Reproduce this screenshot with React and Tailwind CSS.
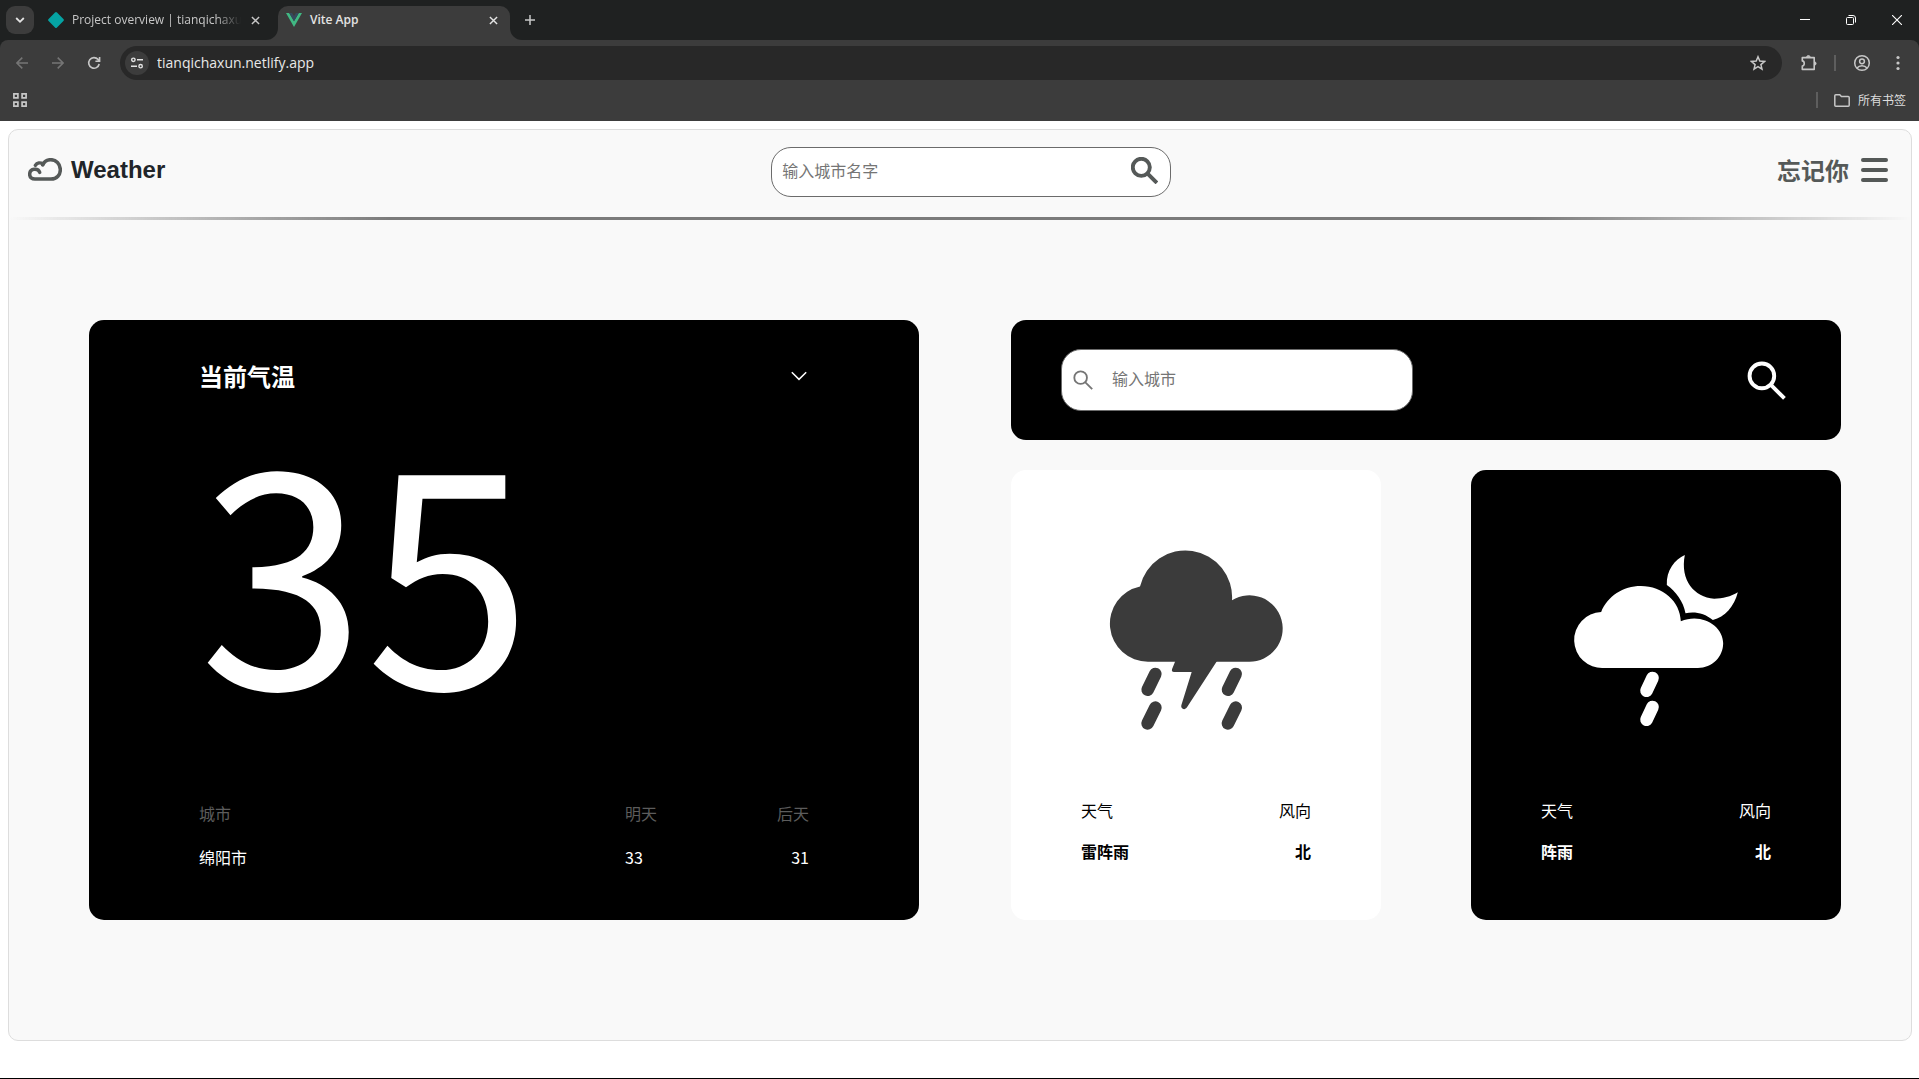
import React from "react";

const CJK = "font-['Noto_Sans_CJK_SC',sans-serif]";
const UI = "font-['Open_Sans','Noto_Sans_CJK_SC',sans-serif]";

function CloseGlyph({ className }) {
  return (
    <svg viewBox="0 0 10 10" className={className} stroke="currentColor" strokeWidth="1.6" fill="none">
      <path d="M1 1 9 9M9 1 1 9" />
    </svg>
  );
}

function TabStrip() {
  return (
    <div className={`flex h-10 items-end bg-[#1f2121] text-[12px] text-[#e3e3e3] ${UI}`}>
      <button aria-label="搜索标签页" className="mb-1.5 ml-1.5 flex size-7 shrink-0 items-center justify-center rounded-[9px] bg-[#3c3c3c]">
        <svg viewBox="0 0 10 10" className="size-2.5" stroke="#e3e3e3" strokeWidth="1.8" fill="none"><path d="M1.2 3 5 6.8 8.8 3" /></svg>
      </button>
      <div className="flex h-[34px] w-[232px] shrink-0 items-center pb-1.5 pl-3.5">
        <svg viewBox="0 0 16 16" className="size-4 shrink-0 text-[#05a3a3]"><path d="M7 .6a1.4 1.4 0 0 1 2 0l6.4 6.4a1.4 1.4 0 0 1 0 2L9 15.4a1.4 1.4 0 0 1-2 0L.6 9a1.4 1.4 0 0 1 0-2z" fill="currentColor" /></svg>
        <span className="ml-2 min-w-0 flex-1 overflow-hidden whitespace-nowrap text-[#c7c7c7] [mask-image:linear-gradient(to_right,#000_85%,transparent)]">Project overview | tianqichaxun</span>
        <button aria-label="关闭标签页" className="mr-1.5 ml-2.5 text-[#c7c7c7]"><CloseGlyph className="size-[9px]" /></button>
      </div>
      <span className="size-3 shrink-0 bg-[#3c3c3c]"><span className="block size-full rounded-br-xl bg-[#1f2121]" /></span>
      <div className="flex h-[34px] w-[232px] shrink-0 items-center rounded-t-[10px] bg-[#3c3c3c] pb-1.5 pl-2">
        <svg viewBox="0 0 16 14" className="h-3.5 w-4 shrink-0">
          <path d="M0 0h3.2L8 8.3 12.8 0H16L8 14z" fill="#41b883" />
          <path d="M3.2 0H6.1L8 3.3 9.9 0h2.9L8 8.3z" fill="#35495e" />
        </svg>
        <span className="ml-2 flex-1 font-semibold">Vite App</span>
        <button aria-label="关闭标签页" className="mr-3"><CloseGlyph className="size-[9px]" /></button>
      </div>
      <span className="size-3 shrink-0 bg-[#3c3c3c]"><span className="block size-full rounded-bl-xl bg-[#1f2121]" /></span>
      <button aria-label="新标签页" className="mb-[15px] ml-[3px] text-[#c7c7c7]">
        <svg viewBox="0 0 10 10" className="size-2.5" stroke="currentColor" strokeWidth="1.5"><path d="M5 0v10M0 5h10" /></svg>
      </button>
      <div className="mb-[15px] ml-auto flex gap-9 pr-[17px] text-white">
        <button aria-label="最小化"><svg viewBox="0 0 10 10" className="size-2.5" stroke="currentColor"><path d="M0 4.5h10" /></svg></button>
        <button aria-label="还原"><svg viewBox="0 0 10 10" className="size-2.5" stroke="currentColor" fill="none"><rect x=".5" y="2.5" width="7" height="7" rx="1" /><path d="M2.5.5H7a2.5 2.5 0 0 1 2.5 2.5v4.5" /></svg></button>
        <button aria-label="关闭"><svg viewBox="0 0 10 10" className="size-2.5" stroke="currentColor" strokeWidth="1.1"><path d="M0 0 10 10M10 0 0 10" /></svg></button>
      </div>
    </div>
  );
}

function AddressRow() {
  return (
    <div className="flex h-[43px] items-center pt-[3px] text-[#c7c7c7]">
      <button aria-label="后退" className="ml-4 text-[#757575]">
        <svg viewBox="0 0 12 12" className="size-3" stroke="currentColor" strokeWidth="1.5" fill="none"><path d="M12 6H1M6.3.6.9 6l5.4 5.4" /></svg>
      </button>
      <button aria-label="前进" className="ml-6 text-[#757575]">
        <svg viewBox="0 0 12 12" className="size-3" stroke="currentColor" strokeWidth="1.5" fill="none"><path d="M0 6h11M5.7.6 11.1 6l-5.4 5.4" /></svg>
      </button>
      <button aria-label="重新加载" className="ml-6">
        <svg viewBox="0 0 12 12" className="size-3 overflow-visible" stroke="currentColor" strokeWidth="1.6" fill="none"><path d="M11.2 7A5.3 5.3 0 1 1 10 2.4L11.3 4M11.6 0v4.2H7.4" /></svg>
      </button>
      <div className="ml-5 flex h-[34px] flex-1 items-center rounded-full bg-[#282828]">
        <button aria-label="查看网站信息" className="ml-[5px] flex size-6 shrink-0 items-center justify-center rounded-full bg-[#3c3c3c]">
          <svg viewBox="0 0 12 12" className="size-3" stroke="#e3e3e3" strokeWidth="1.4" fill="none"><circle cx="2.4" cy="2.8" r="1.7" /><path d="M6 2.8h6M0 9.2h6" /><circle cx="9.6" cy="9.2" r="1.7" /></svg>
        </button>
        <input aria-label="地址" defaultValue="tianqichaxun.netlify.app" className={`ml-2 min-w-0 flex-1 bg-transparent text-[14px] leading-5 text-[#e8e8e8] outline-none ${UI}`} />
        <button aria-label="添加书签" className="mr-4">
          <svg viewBox="0 0 16 16" className="size-4" stroke="currentColor" strokeWidth="1.5" fill="none"><path d="m8 1.8 1.8 4.3 4.7.4-3.6 3.1 1.1 4.6L8 11.7l-4 2.5 1.1-4.6L1.5 6.5l4.7-.4z" /></svg>
        </button>
      </div>
      <button aria-label="扩展程序" className="ml-[18px]">
        <svg viewBox="0 0 18 18" className="size-[18px]" fill="none" stroke="currentColor" strokeWidth="1.6" strokeLinejoin="round"><path d="M2.3 3.6h11.9v11.8H2.3v-3.3c2.6-.4 2.6-4.8 0-5.2z" /><path d="M6.6 2.8a1.9 1.9 0 0 1 3.6 0zM15 7.9a1.7 1.7 0 0 1 0 3.2z" fill="currentColor" strokeWidth=".8" /></svg>
      </button>
      <span className="ml-4 h-4 w-0.5 bg-[#5e5e5e]" />
      <button aria-label="个人资料" className="ml-[18px]">
        <svg viewBox="0 0 16 16" className="size-4 overflow-visible" fill="none" stroke="currentColor" strokeWidth="1.5"><circle cx="8" cy="8" r="7.3" /><circle cx="8" cy="6.3" r="2.4" /><path d="M3 13c2.4-3 7.6-3 10 0" /></svg>
      </button>
      <button aria-label="菜单" className="mr-[19px] ml-[26px]">
        <svg viewBox="0 0 4 16" className="h-4 w-1" fill="currentColor"><circle cx="2" cy="2.5" r="1.6" /><circle cx="2" cy="8" r="1.6" /><circle cx="2" cy="13.5" r="1.6" /></svg>
      </button>
    </div>
  );
}

function BookmarkRow() {
  return (
    <div className="flex h-[38px] items-center pb-1 text-[#c7c7c7]">
      <button aria-label="应用" className="ml-[13px]">
        <svg viewBox="0 0 14 14" className="size-3.5" fill="none" stroke="currentColor" strokeWidth="1.7"><path d="M.9.9h4v4h-4zM9.1.9h4v4h-4zM.9 9.1h4v4h-4zM9.1 9.1h4v4h-4z" /></svg>
      </button>
      <span className="ml-auto h-4 w-0.5 bg-[#5e5e5e]" />
      <button className={`mr-[13px] ml-4 flex items-center gap-2 text-[12px] leading-4 text-[#dedede] ${CJK}`}>
        <svg viewBox="0 0 16 13" className="h-[13px] w-4" fill="none" stroke="#c7c7c7" strokeWidth="1.5" strokeLinejoin="round"><path d="M.8 11V1.800c0-.6.4-1 1-1h4l1.600 1.700h6.800c.6 0 1 .4 1 1v7.700c0 .6-.4 1-1 1H1.800c-.6 0-1-.4-1-1z" /></svg>
        所有书签
      </button>
    </div>
  );
}

function CloudLogo() {
  return (
    <svg viewBox="84 127 102 69" className="h-[23px] w-[34px]" fill="none" stroke="#555958" strokeWidth="10.5" strokeLinecap="round" strokeLinejoin="round">
      <path d="M119 170C115 157 89 157 89 176c0 9 7 14 16 14h48c18 0 28-13 28-28 0-17-13-30-29-30-12 0-20 6-24 16" />
      <path d="M106 149c5-8 15-9 23-4" />
    </svg>
  );
}

function SearchGlyph({ className, weight }) {
  return (
    <svg viewBox="0 0 38 38" className={className} fill="none" stroke="currentColor" strokeWidth={weight}>
      <circle cx="14.5" cy="14.5" r="12" />
      <path d="M23 23 36.5 36.5" />
    </svg>
  );
}

function SiteHeader() {
  return (
    <header className="flex h-[87px] items-center justify-between pr-[23px] pb-1 pl-[19px]">
      <a href="#" className="flex items-center gap-[9px] pb-1 font-['Liberation_Sans',sans-serif] text-2xl font-bold text-[#212529]">
        <CloudLogo />
        Weather
      </a>
      <form className="flex h-[50px] w-[400px] items-center rounded-[20px] border border-[#6b6b6b] bg-white" onSubmit={(e) => e.preventDefault()}>
        <input aria-label="城市名字" placeholder="输入城市名字" className={`min-w-0 flex-1 bg-transparent pb-1 pl-2.5 text-base outline-none placeholder:text-[#757575] ${CJK}`} />
        <button aria-label="搜索" className="mr-3 mb-0.5 text-[#555958]">
          <SearchGlyph className="size-[27px]" weight="5.5" />
        </button>
      </form>
      <div className={`flex items-center gap-3 pb-1 text-2xl font-bold text-[#555958] ${CJK}`}>
        <span>忘记你</span>
        <button aria-label="打开菜单" className="flex w-[27px] flex-col gap-1.5">
          <span className="h-1 rounded-xs bg-[#555958]" />
          <span className="h-1 rounded-xs bg-[#555958]" />
          <span className="h-1 rounded-xs bg-[#555958]" />
        </button>
      </div>
    </header>
  );
}

function TemperatureCard() {
  return (
    <section className="flex h-[600px] flex-col rounded-[15px] bg-black px-[110px] pt-10 text-white">
      <div className="flex items-center justify-between">
        <h2 className="text-2xl leading-8 font-bold">当前气温</h2>
        <button aria-label="展开" className="mr-0.5">
          <svg viewBox="0 0 16 10" className="h-2.5 w-4" fill="none" stroke="currentColor" strokeWidth="1.5"><path d="M.8 1.2 8 8.4l7.2-7.2" /></svg>
        </button>
      </div>
      <p className="mt-4 text-[300px] leading-[300px]">35</p>
      <table className="mt-auto mb-[51px] w-full table-fixed text-left text-base leading-6">
        <thead>
          <tr className="text-[#5c5c5c]">
            <th className="w-[426px] p-0 pb-5 font-normal">城市</th>
            <th className="p-0 pb-5 font-normal">明天</th>
            <th className="p-0 pb-5 text-right font-normal">后天</th>
          </tr>
        </thead>
        <tbody>
          <tr>
            <td className="p-0">绵阳市</td>
            <td className="p-0">33</td>
            <td className="p-0 text-right">31</td>
          </tr>
        </tbody>
      </table>
    </section>
  );
}

function ThunderRain() {
  return (
    <svg viewBox="90 92 516 537" className="h-[179px] w-[172px] overflow-visible text-[#3b3b3b]" fill="currentColor">
      <path d="M204 424A114 114 0 0 1 180 198.5 140 140 0 0 1 456 240 99.5 99.5 0 1 1 507 424z" />
      <path d="M286 422 276 447q-2 8 6 8h53L304 555c-3 11 11 16 17 6L411 422z" />
      <path d="M226 461 203 508M226 562 203 609M467 461 444 508M467 562 444 609" stroke="currentColor" strokeWidth="38" strokeLinecap="round" />
    </svg>
  );
}

function NightShower() {
  return (
    <svg viewBox="73 75 488 513" className="h-[171px] w-[163px] overflow-visible text-white" fill="currentColor">
      <path d="M157 414A84 84 0 0 1 151 246C170 198 217 168 270 168c66 0 118 46 120 106 62-27 127 14 127 66 0 41-33 74-76 74z" />
      <path d="M402 75C372 88 346 122 348 165C375 184 398 215 404 250C432 244 461 250 486 270C522 262 550 230 561 187C540 200 515 206 490 206C430 202 387 150 402 75Z" />
      <path d="M305 444 287 482M305 531 287 569" stroke="currentColor" strokeWidth="38" strokeLinecap="round" />
    </svg>
  );
}

function ForecastCard({ dark, icon, weather, wind }) {
  return (
    <section className={`flex h-[450px] w-[370px] flex-col items-center rounded-[15px] px-[70px] pb-[57px] ${dark ? "bg-black text-white" : "bg-white text-black"}`}>
      <div className="mt-20 flex h-[180px] items-center">{icon}</div>
      <dl className="mt-auto flex w-full justify-between text-base leading-6">
        <div>
          <dt>天气</dt>
          <dd className="mt-[17px] font-bold">{weather}</dd>
        </div>
        <div className="text-right">
          <dt>风向</dt>
          <dd className="mt-[17px] font-bold">{wind}</dd>
        </div>
      </dl>
    </section>
  );
}

export default function App() {
  return (
    <div className="flex min-h-screen flex-col border-b border-black bg-white">
      <div className="shrink-0 bg-[#1f2121]">
        <TabStrip />
        <div className="rounded-t-lg bg-[#3c3c3c]">
          <AddressRow />
          <BookmarkRow />
        </div>
      </div>
      <main className="flex flex-1 flex-col pt-2 pr-[7px] pb-[37px] pl-2">
        <div className="flex-1 rounded-[10px] border border-[#dddddd] bg-[#f9f9f9]">
          <SiteHeader />
          <div className="h-[3px] bg-linear-to-r from-transparent via-[#7b7b7b] via-20% to-[#7b7b7b] to-80% [mask-image:linear-gradient(to_right,#000_80%,transparent)]" />
          <div className={`grid grid-cols-2 gap-[92px] pt-[100px] pr-[70px] pb-20 pl-20 ${CJK}`}>
            <TemperatureCard />
            <div className="flex flex-col justify-between">
              <form className="flex h-[120px] items-center justify-between rounded-[15px] bg-black px-[50px]" onSubmit={(e) => e.preventDefault()}>
                <label className="flex h-[62px] w-[352px] items-center rounded-[20px] border border-[#6b6b6b] bg-white pl-[11px] text-[#757575]">
                  <SearchGlyph className="size-5 shrink-0" weight="3.5" />
                  <input aria-label="城市" placeholder="输入城市" className="ml-[19px] min-w-0 flex-1 bg-transparent pb-1 text-base text-black outline-none placeholder:text-[#757575]" />
                </label>
                <button aria-label="查询" className="mr-[5px] text-white">
                  <SearchGlyph className="size-[39px]" weight="3.8" />
                </button>
              </form>
              <div className="flex justify-between">
                <ForecastCard icon={<ThunderRain />} weather="雷阵雨" wind="北" />
                <ForecastCard dark icon={<NightShower />} weather="阵雨" wind="北" />
              </div>
            </div>
          </div>
        </div>
      </main>
    </div>
  );
}
